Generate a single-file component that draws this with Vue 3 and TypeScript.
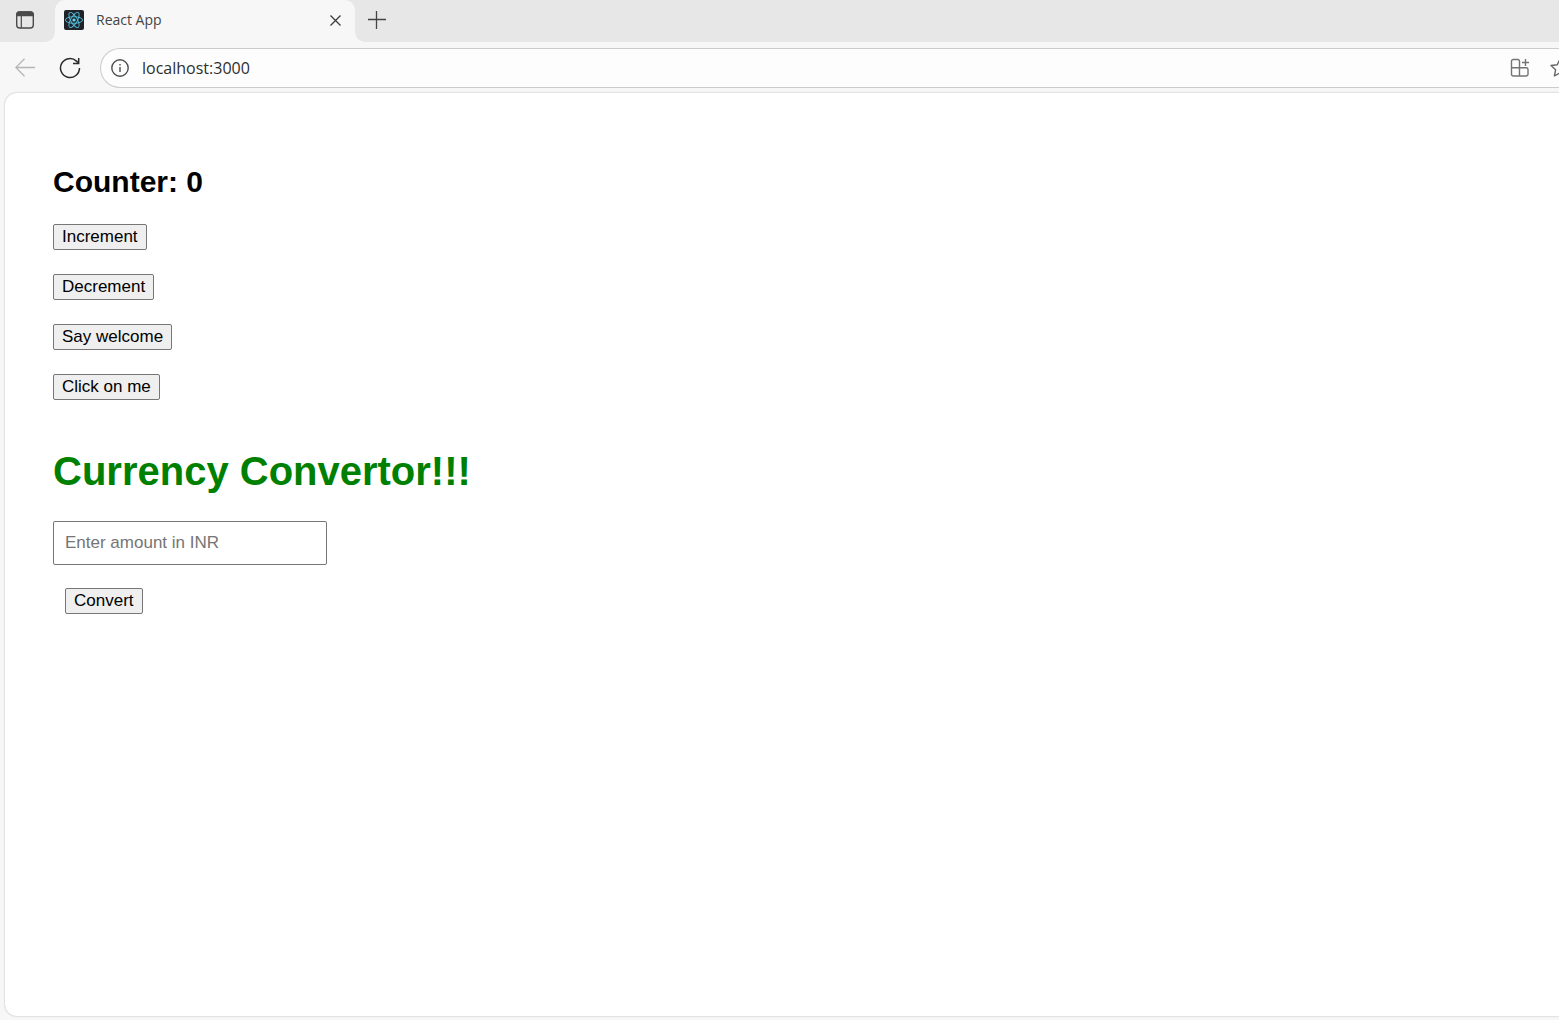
<script setup lang="ts">
import { ref } from 'vue'

const address = ref('localhost:3000')
const counter = ref(0)
const amount = ref('')

const increment = (): void => {
  counter.value += 1
}
const decrement = (): void => {
  counter.value -= 1
}
const sayWelcome = (): void => window.alert('Welcome')
const clickOnMe = (): void => window.alert('I was clicked')
const convert = (): void => {
  window.alert(`Converting to Euro, amount is ${(Number(amount.value) / 80).toFixed(2)}`)
}
</script>

<template>
  <div class="browser">
    <header>
      <div class="tab-strip">
        <div class="strip-start">
          <button class="icon-button" type="button" aria-label="Tab actions">
            <svg width="20" height="20" viewBox="0 0 20 20" fill="none" stroke="#4a4a4a" stroke-width="1.4">
              <rect x="1.7" y="2" width="16.6" height="16" rx="3" />
              <path d="M2 5.5V4.5A2.5 2.5 0 0 1 4.5 2h11A2.5 2.5 0 0 1 18 4.5v1z" fill="#4a4a4a" />
              <path d="M6.3 6v12" stroke-width="1.2" />
            </svg>
          </button>
        </div>
        <div class="tab-slot">
          <div class="tab">
            <svg width="20" height="20" viewBox="0 0 20 20" fill="none" stroke="#53c1de">
              <rect width="20" height="20" rx="2" fill="#20232a" stroke="none" />
              <circle cx="10" cy="10" r="1.6" fill="#61dafb" stroke="none" />
              <g stroke-width="0.9">
                <ellipse cx="10" cy="10" rx="8.6" ry="3.3" />
                <ellipse cx="10" cy="10" rx="8.6" ry="3.3" transform="rotate(60 10 10)" />
                <ellipse cx="10" cy="10" rx="8.6" ry="3.3" transform="rotate(120 10 10)" />
              </g>
            </svg>
            <span class="tab-title">React App</span>
            <button class="icon-button" type="button" aria-label="Close tab">
              <svg width="12" height="12" viewBox="0 0 12 12" stroke="#3c3c3c" stroke-width="1.3">
                <path d="M1.5 1.5l10 10M11.5 1.5l-10 10" />
              </svg>
            </button>
          </div>
        </div>
        <div class="strip-end">
          <button class="icon-button" type="button" aria-label="New tab">
            <svg width="18" height="18" viewBox="0 0 18 18" stroke="#444" stroke-width="1.3">
              <path d="M0 8.5h18M8.5 0v18" />
            </svg>
          </button>
        </div>
      </div>
      <div class="toolbar">
        <button class="icon-button" type="button" aria-label="Back" disabled>
          <svg width="20" height="20" viewBox="0 0 20 20" fill="none" stroke="#b5b5b5" stroke-width="1.3">
            <path d="M20 9.5H.8M9.500 .8L.8 9.500l8.700 8.700" />
          </svg>
        </button>
        <button class="icon-button" type="button" aria-label="Refresh">
          <svg width="22" height="22" viewBox="0 0 22 22" fill="none" stroke="#2b2b2b" stroke-width="1.5">
            <path d="M20.500 11A9.500 9.500 0 1 1 17.500 4.100L19.500 6" />
            <path d="M19.700 1v5.500H14" />
          </svg>
        </button>
        <div class="address-bar">
          <svg width="18" height="18" viewBox="0 0 18 18" fill="none" stroke="#4f4f4f" stroke-width="1.4">
            <circle cx="9" cy="9" r="8.2" />
            <path d="M9 8v5M9 5v1.5" />
          </svg>
          <input v-model="address" class="address" type="text" aria-label="Address" />
          <button class="icon-button" type="button" aria-label="Install app">
            <svg width="20" height="20" viewBox="0 0 20 20" fill="none" stroke="#737373" stroke-width="1.4">
              <path d="M9.5 9.7V3.200a1.700 1.700 0 0 0-1.700-1.700H3.200a1.700 1.700 0 0 0-1.700 1.700v13.100a1.700 1.700 0 0 0 1.700 1.700h13.100a1.700 1.700 0 0 0 1.700-1.700v-4.900a1.700 1.700 0 0 0-1.700-1.700H1.500M9.500 9.700V18" />
              <path d="M15.500 1v7M12 4.500h7" />
            </svg>
          </button>
          <button class="icon-button" type="button" aria-label="Add to favorites">
            <svg width="20" height="20" viewBox="0 0 20 20" fill="none" stroke="#666" stroke-width="1.4" stroke-linejoin="round">
              <path d="M10 1l2.700 5.700 6.300.8-4.600 4.300 1.200 6.200L10 15l-5.600 3 1.200-6.200L1 7.500l6.300-.8z" />
            </svg>
          </button>
        </div>
      </div>
    </header>

    <main class="page">
      <section class="counter">
        <h2>Counter: {{ counter }}</h2>
        <button class="action" type="button" @click="increment">Increment</button>
        <button class="action" type="button" @click="decrement">Decrement</button>
        <button class="action" type="button" @click="sayWelcome">Say welcome</button>
        <button class="action" type="button" @click="clickOnMe">Click on me</button>
      </section>
      <form class="convertor" @submit.prevent="convert">
        <h1>Currency Convertor!!!</h1>
        <input v-model="amount" class="amount" type="text" placeholder="Enter amount in INR" aria-label="Amount in INR" />
        <button class="action submit" type="submit">Convert</button>
      </form>
    </main>
  </div>
</template>

<style>
body {
  margin: 0;
}
</style>

<style scoped>
.browser {
  display: flex;
  flex-direction: column;
  box-sizing: border-box;
  min-height: 100vh;
  padding-bottom: 4px;
  overflow: hidden;
  background: #f7f7f7;
  font-family: "Liberation Sans", Arial, sans-serif;
}

svg {
  display: block;
  flex: none;
}

.icon-button {
  flex: none;
  padding: 0;
  border: 0;
  background: none;
}

.tab-strip {
  display: flex;
  height: 42px;
}

.strip-start,
.strip-end {
  display: flex;
  align-items: center;
  box-sizing: border-box;
  padding-bottom: 2px;
  background: #e7e7e7;
}

.strip-start {
  width: 55px;
  padding-left: 15px;
  border-bottom-right-radius: 10px;
}

.strip-end {
  flex: 1;
  padding-left: 13px;
  border-bottom-left-radius: 10px;
}

.tab-slot {
  width: 300px;
  background: #e7e7e7;
}

.tab {
  display: flex;
  align-items: center;
  gap: 12px;
  box-sizing: border-box;
  height: 42px;
  padding: 0 14px 2px 9px;
  border-radius: 10px 10px 0 0;
  background: #f7f7f7;
}

.tab-title {
  flex: 1;
  color: #444;
  font: 14px/20px "Open Sans", "Noto Sans", sans-serif;
}

.toolbar {
  display: flex;
  align-items: center;
  height: 51px;
  padding-left: 15px;
  gap: 24px;
}

.address-bar {
  display: flex;
  flex: 1;
  align-items: center;
  gap: 20px;
  box-sizing: border-box;
  height: 40px;
  margin-left: -5px;
  margin-right: -11px;
  padding-left: 10px;
  border: 1px solid #cbcbcb;
  border-right: 0;
  border-radius: 20px 0 0 20px;
  background: #fdfdfd;
}

.address {
  flex: 1;
  min-width: 0;
  margin-left: -7px;
  padding: 0;
  border: 0;
  outline: 0;
  background: none;
  color: #2e2e2e;
  font: 16px/24px "Open Sans", "Noto Sans", sans-serif;
}

.page {
  flex: 1;
  margin-left: 5px;
  padding: 71px 48px 48px;
  border-radius: 12px 0 0 12px;
  background: #fff;
  box-shadow: 0 0 2px rgba(0, 0, 0, 0.3);
}

.counter,
.convertor {
  display: flex;
  flex-direction: column;
  align-items: flex-start;
}

.counter {
  gap: 24px;
}

.convertor {
  gap: 23px;
  margin-top: 47px;
}

h1,
h2 {
  margin: 0;
}

h2 {
  font-size: 30px;
  line-height: 36px;
}

h1 {
  margin-bottom: 3px;
  color: #008000;
  font-size: 40px;
  line-height: 48px;
}

.action {
  height: 26px;
  padding: 0 8px;
  border: 1px solid #767676;
  border-radius: 2px;
  background: #efefef;
  color: #000;
  font: 17px/24px "Liberation Sans", Arial, sans-serif;
}

.amount {
  box-sizing: border-box;
  width: 274px;
  height: 44px;
  padding: 0 11px;
  border: 1px solid #767676;
  border-radius: 2px;
  background: #fff;
  color: #000;
  font: 17px/20px "Liberation Sans", Arial, sans-serif;
}

.amount::placeholder {
  color: #757575;
}

.submit {
  margin-left: 12px;
}
</style>
